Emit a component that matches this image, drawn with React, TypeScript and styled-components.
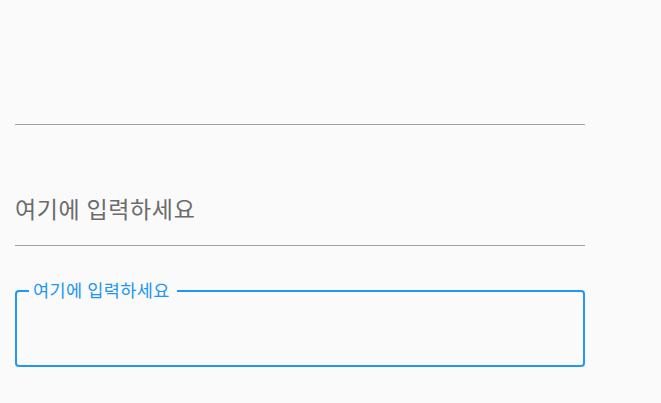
import React from 'react'
import styled, { createGlobalStyle } from 'styled-components'

const GlobalStyle = createGlobalStyle`
	html, body {
		margin: 0;
		padding: 0;
		background: #fafafa;
	}

	body {
		font-family: Roboto, "Noto Sans CJK KR", sans-serif;
	}
`

const HINT = '여기에 입력하세요'

const Page = styled.div`
	display: flex;
	flex-direction: column;
	width: 570px;
	padding: 65px 0 0 15px;
`

const UnderlineField = styled.label<{ $offset?: number }>`
	display: flex;
	align-items: flex-start;
	height: 60px;
	box-sizing: border-box;
	margin-top: ${p => p.$offset ?? 0}px;
	padding-top: 12px;
	border-bottom: 1px solid #a0a0a0;
`

const Input = styled.input`
	width: 100%;
	height: 24px;
	padding: 0;
	margin: 0;
	border: none;
	outline: none;
	background: transparent;
	font-family: Roboto, "Noto Sans CJK KR", sans-serif;
	font-size: 23px;
	letter-spacing: 0.6px;
	color: #212121;

	&::placeholder {
		color: #6b6b6b;
	}
`

const Outlined = styled.fieldset`
	margin: 35px 0 0;
	padding: 0 12px 0 12px;
	min-width: 0;
	height: 86px;
	box-sizing: border-box;
	border: 2px solid #2196f3;
	border-radius: 4px;
`

const Legend = styled.legend`
	padding: 0 7px 0 4px;
	margin-left: 0;
	font-family: Roboto, "Noto Sans CJK KR", sans-serif;
	font-size: 17.5px;
	letter-spacing: 0.4px;
	line-height: 20px;
	color: #2196f3;
`

export default function App() {
	return (
		<>
			<GlobalStyle />
			<Page>
				<UnderlineField>
					<Input />
				</UnderlineField>
				<UnderlineField $offset={61}>
					<Input placeholder={HINT} />
				</UnderlineField>
				<Outlined>
					<Legend>{HINT}</Legend>
					<Input />
				</Outlined>
			</Page>
		</>
	)
}
